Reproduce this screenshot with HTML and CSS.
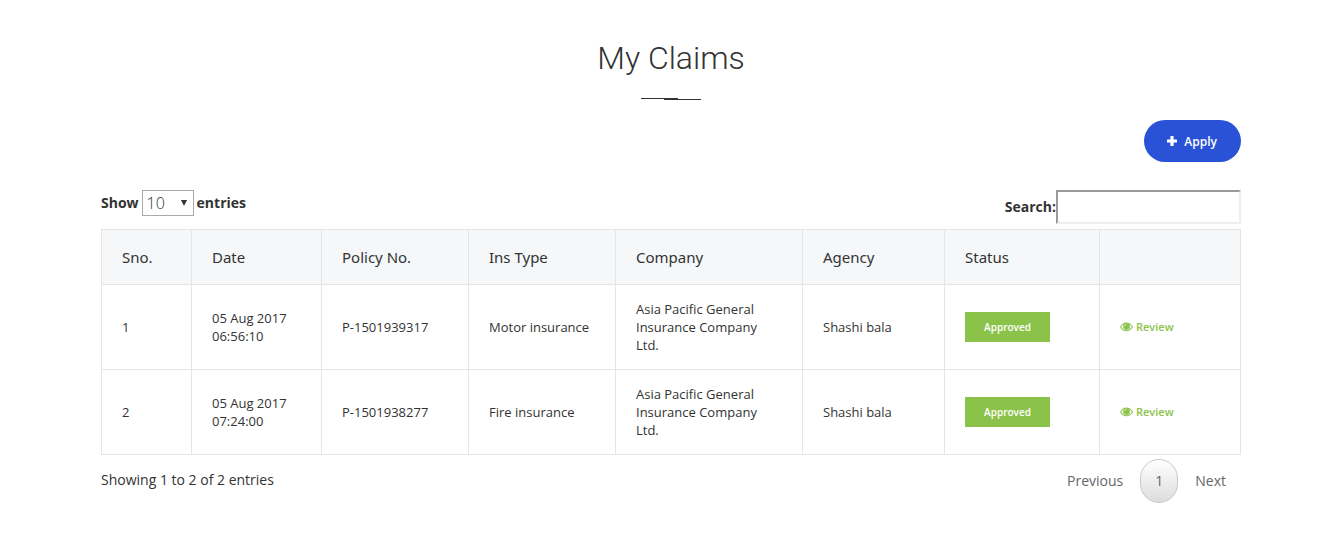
FILE: index.html
```html
<!DOCTYPE html>
<html lang="en">
<head>
    <meta charset="UTF-8">
    <meta name="viewport" content="width=device-width, initial-scale=1.0">
    <title>My Claims</title>
    <link rel="stylesheet" href="styles.css">
</head>
<body>
    <div class="container">
        <h1 class="page-title">My Claims</h1>
        <div class="divider"><span></span><span></span></div>

        <div class="actions">
            <button type="button" class="btn-apply">
                <svg class="icon-plus" viewBox="0 0 10 10" aria-hidden="true"><path d="M4 0h2q.6 0 .6.600V3.400H9.400q.6 0 .6.600V6q0 .6-.6.600H6.600V9.400q0 .6-.6.600H4q-.6 0-.6-.6V6.600H.6Q0 6.600 0 6V4q0-.6.6-.6H3.400V.6Q3.400 0 4 0z"/></svg>
                Apply
            </button>
        </div>

        <!-- Table controls -->
        <div class="table-controls">
            <label class="length" for="length">Show
                <select id="length" class="length-select">
                    <option>10</option>
                    <option>25</option>
                    <option>50</option>
                    <option>100</option>
                </select>
                entries</label>
            <div class="filter">
                <label for="search">Search:</label>
                <input type="search" id="search" class="search-input">
            </div>
        </div>

        <table class="claims">
            <colgroup>
                <col class="col-sno">
                <col class="col-date">
                <col class="col-policy">
                <col class="col-type">
                <col class="col-company">
                <col class="col-agency">
                <col class="col-status">
                <col class="col-review">
            </colgroup>
            <thead>
                <tr>
                    <th>Sno.</th>
                    <th>Date</th>
                    <th>Policy No.</th>
                    <th>Ins Type</th>
                    <th>Company</th>
                    <th>Agency</th>
                    <th>Status</th>
                    <th></th>
                </tr>
            </thead>
            <tbody>
                <tr>
                    <td>1</td>
                    <td>05 Aug 2017 06:56:10</td>
                    <td>P-1501939317</td>
                    <td>Motor insurance</td>
                    <td>Asia Pacific General Insurance Company Ltd.</td>
                    <td>Shashi bala</td>
                    <td><button type="button" class="status">Approved</button></td>
                    <td>
                        <a href="#" class="review">
                            <svg class="icon-eye" viewBox="0 0 14 10" aria-hidden="true"><path class="lid" d="M0.600 5C3.800-.8 10.200-.8 13.400 5C10.200 10.300 3.800 10.300 0.600 5z"/><circle cx="7" cy="4.400" r="3.600"/><path class="shine" d="M5 4.100A2 2 0 0 1 7 2.100"/></svg>
                            Review
                        </a>
                    </td>
                </tr>
                <tr>
                    <td>2</td>
                    <td>05 Aug 2017 07:24:00</td>
                    <td>P-1501938277</td>
                    <td>Fire insurance</td>
                    <td>Asia Pacific General Insurance Company Ltd.</td>
                    <td>Shashi bala</td>
                    <td><button type="button" class="status">Approved</button></td>
                    <td>
                        <a href="#" class="review">
                            <svg class="icon-eye" viewBox="0 0 14 10" aria-hidden="true"><path class="lid" d="M0.600 5C3.800-.8 10.200-.8 13.400 5C10.200 10.300 3.800 10.300 0.600 5z"/><circle cx="7" cy="4.400" r="3.600"/><path class="shine" d="M5 4.100A2 2 0 0 1 7 2.100"/></svg>
                            Review
                        </a>
                    </td>
                </tr>
            </tbody>
        </table>

        <!-- Table footer -->
        <div class="table-footer">
            <div class="info">Showing 1 to 2 of 2 entries</div>
            <nav class="paginate">
                <a href="#">Previous</a>
                <a href="#" class="current">1</a>
                <a href="#">Next</a>
            </nav>
        </div>
    </div>
</body>
</html>
```

FILE: styles.css
```css
* {
    box-sizing: border-box;
}

body {
    margin: 0;
    padding: 36px 99px 40px 101px;
    background: #fff;
    color: #333;
    font-family: "Open Sans", sans-serif;
    font-size: 14px;
    line-height: 20px;
}

.container {
    max-width: 1140px;
    margin: 0 auto;
}

.page-title {
    margin: 0;
    font-family: Roboto, sans-serif;
    font-size: 32px;
    font-weight: 300;
    line-height: 44px;
    text-align: center;
}

/* two thin strokes, the second one a step lower */
.divider {
    display: grid;
    grid-template-rows: 1px 1px;
    width: 60px;
    margin: 18px auto 20px;
}

.divider span {
    width: 37px;
    background: #333;
}

.divider span:last-child {
    justify-self: end;
}

.actions {
    display: flex;
    justify-content: flex-end;
}

.btn-apply {
    display: flex;
    align-items: center;
    gap: 7px;
    height: 42px;
    padding: 0 24px 0 23px;
    border: none;
    border-radius: 21px;
    background: #2952d6;
    color: #fff;
    font-family: inherit;
    font-size: 12px;
    font-weight: 600;
    cursor: pointer;
}

.icon-plus {
    width: 10px;
    height: 10px;
    fill: #fff;
}

/* Controls */
.table-controls {
    display: flex;
    justify-content: space-between;
    align-items: flex-start;
    margin-top: 28px;
    font-weight: 700;
}

.length {
    display: flex;
    align-items: center;
    gap: 3px;
}

.length-select {
    appearance: none;
    width: 52px;
    height: 26px;
    padding: 0 4px;
    border: 1px solid #a9a9a9;
    border-radius: 0;
    background: #fff url("data:image/svg+xml,%3Csvg xmlns='http://www.w3.org/2000/svg' width='6' height='6'%3E%3Cpath d='M0 0h6L3 6z' fill='%23333'/%3E%3C/svg%3E") no-repeat right 6px center;
    color: #333;
    font-family: inherit;
    font-size: 16px;
    font-weight: 300;
}

.filter {
    display: flex;
    align-items: center;
}

.search-input {
    width: 185px;
    height: 34px;
    padding: 0 8px;
    border: 2px solid;
    border-color: #9a9a9a #eee #eee #9a9a9a;
    background: #fff;
    font-family: inherit;
    font-size: 16px;
    font-weight: 300;
}

/* Claims table */
.claims {
    width: 100%;
    margin-top: 5px;
    border-collapse: collapse;
    table-layout: fixed;
}

.claims th,
.claims td {
    padding: 0 20px;
    border: 1px solid #e4e5e7;
    text-align: left;
    vertical-align: middle;
}

.claims th {
    height: 55px;
    background: #f5f7f9;
    font-family: "Noto Sans", sans-serif;
    font-size: 15px;
    font-weight: 400;
}

.claims td {
    height: 85px;
    font-size: 13px;
    line-height: 18px;
}

.col-sno { width: 90px; }
.col-date { width: 130px; }
.col-policy { width: 147px; }
.col-type { width: 147px; }
.col-company { width: 187px; }
.col-agency { width: 142px; }
.col-status { width: 155px; }

.status {
    display: block;
    width: 85px;
    height: 30px;
    padding: 0;
    border: none;
    background: #8bc34a;
    color: #fff;
    font-family: inherit;
    font-size: 10px;
    font-weight: 600;
    cursor: pointer;
}

.review {
    display: flex;
    align-items: center;
    gap: 3px;
    color: #8bc34a;
    font-size: 11px;
    font-weight: 600;
    line-height: 20px;
    text-decoration: none;
}

.icon-eye {
    width: 13px;
    height: 10px;
    fill: #8bc34a;
}

.icon-eye .lid {
    fill: none;
    stroke: #8bc34a;
    stroke-width: 1.1;
}

.icon-eye .shine {
    fill: none;
    stroke: #fff;
    stroke-width: 0.6;
}

/* Footer */
.table-footer {
    display: flex;
    justify-content: space-between;
    margin-top: 4px;
}

.info {
    padding-top: 11px;
}

.paginate {
    display: flex;
    gap: 2px;
}

.paginate a {
    padding: 11px 14px;
    border: 1px solid transparent;
    border-radius: 20px;
    color: #666;
    text-decoration: none;
}

.paginate .current {
    border-color: #cacaca;
    background: linear-gradient(to bottom, #fff 0%, #dcdcdc 100%);
}
```
